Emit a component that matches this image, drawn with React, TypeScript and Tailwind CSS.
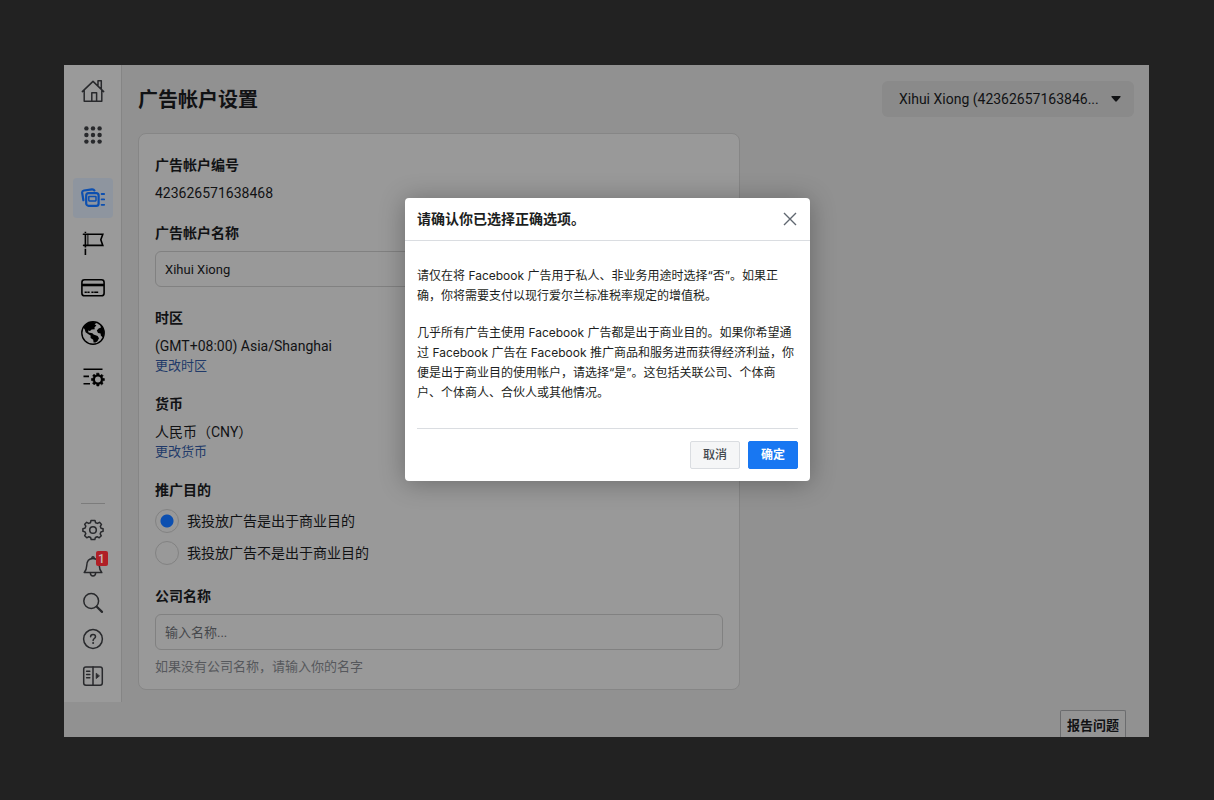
import React, { FC, ReactNode } from "react";

interface IconProps {
	children: ReactNode;
	className?: string;
}

const Icon: FC<IconProps> = ({ children, className = "" }) => (
	<svg
		viewBox="0 0 24 24"
		className={`w-6 h-6 shrink-0 ${className}`}
		fill="none"
		stroke="currentColor"
		strokeWidth="1.5"
		strokeLinecap="round"
		strokeLinejoin="round"
		aria-hidden="true"
	>
		{children}
	</svg>
);

const HomeIcon = () => (
	<Icon>
		<path d="M1.3 12.6 12 2.4 22.7 12.6M3.2 11V22.3H20.8V11M17 6.8V1.8H20.3V10M10.8 22V13.8H15.6V22" />
	</Icon>
);

const GridIcon = () => (
	<Icon>
		<g fill="currentColor" stroke="none">
			{[5.4, 12, 18.6].map((y) =>
				[5.4, 12, 18.6].map((x) => (
					<circle key={`${x}-${y}`} cx={x} cy={y} r="2.2" />
				))
			)}
		</g>
	</Icon>
);

const AccountsIcon = () => (
	<Icon className="text-[#0c4fb0]">
		<rect x="5.2" y="7.2" width="12.4" height="12.6" rx="2.4" strokeWidth="2.2" />
		<rect x="7.8" y="10.4" width="7.2" height="4.6" rx="0.4" strokeWidth="1.5" />
		<path d="M2.4 14.2 1.2 7Q0.9 4.9 3 4.5L11 3.3Q12.8 3.2 13.4 4.4" strokeWidth="2.2" />
		<path d="M20.6 8H23.2M20.6 13.4H23.2M20.6 18.8H23.2" strokeWidth="1.8" />
	</Icon>
);

const FlagIcon = () => (
	<Icon className="text-black">
		<path d="M4.4 0.8V24" strokeWidth="1.6" strokeDasharray="1.2 1 13.4 1.4 7" strokeLinecap="butt" />
		<path d="M2.4 3.2H21.8L19.8 8.8 21.8 14.4H2.6" strokeLinejoin="miter" strokeWidth="1.6" />
		<path d="M6.9 3.2V14.2" strokeWidth="1" />
	</Icon>
);

const CardIcon = () => (
	<Icon className="text-black">
		<rect x="0.9" y="3.8" width="22.2" height="16" rx="2.6" strokeWidth="1.6" />
		<path d="M1 9H23" strokeWidth="2.6" strokeLinecap="butt" />
		<path d="M3.6 16.2H8.6M10.4 16.2H17.2" strokeWidth="1.6" strokeDasharray="2.2 .6 4 .4" strokeLinecap="butt" />
	</Icon>
);

const GlobeIcon = () => (
	<Icon className="text-black">
		<circle cx="12" cy="12" r="11.2" strokeWidth="1.4" />
		<g fill="currentColor" stroke="none">
			<path d="M2.4 6.4C4.6 2.8 8.2 .9 12.2 1L15.6 1.8 13.6 3.2 15.4 4.6 13.4 6.4 13.8 8.2 10.6 8.4 9 10 7 9.6 7.6 11.4 11.4 12.2 12.6 13.6 16.6 15 18 17.2 16.4 20.2 14.6 21.6 12.6 21.4 12.2 18.8 9.6 17 9.6 14.6 7.4 13.2 4.6 11.2 3.8 8.6Z" />
			<path d="M19 3.6C21.6 5.6 23 8.6 23 12 22.9 13.8 22.4 15.2 21.8 16.4L19.8 14.6 19.6 12.6 17 12 15.8 9.6 17.6 7.4 20 6.6Z" />
		</g>
	</Icon>
);

// one path of eight teeth, drawn around the centre
const COG =
	"M10.3 1.6H13.7L14.2 4.4 16.2 5.2 18.5 3.6 20.6 5.7 19 8 19.8 10 22.6 10.4V13.7L19.8 14.2 19 16.1 20.5 18.4 18.2 20.7 16 19.1 14 19.9 13.6 22.6H10.3L9.8 19.9 7.9 19.1 5.6 20.6 3.3 18.3 4.9 16 4.1 14.1 1.4 13.6V10.3L4.1 9.9 5 7.9 3.4 5.6 5.6 3.5 7.9 5 9.8 4.3Z";

const ListCogIcon = () => (
	<Icon className="text-black">
		<path d="M2.5 3.2H21.5M2.5 10.4H8M2.5 17.8H9" strokeWidth="1.6" strokeLinecap="butt" />
		<g transform="translate(9.6 6.2) scale(0.61)">
			<path d={COG} fill="currentColor" strokeWidth="1" />
			<circle cx="12" cy="12" r="4.8" fill="#9a9a9a" stroke="none" />
		</g>
	</Icon>
);

const GearIcon = () => (
	<Icon>
		<path d="M10 2.5H14L14.6 4.7 16.5 5.4 18.5 4.3 20.5 6.4 19.3 8.3 20 10.2 22.1 10.7V13.3L20 13.9 19.2 15.8 20.3 17.8 18.2 19.8 16.2 18.7 14.4 19.5 13.8 21.6H10.2L9.6 19.5 7.8 18.7 5.8 19.8 3.7 17.7 4.8 15.7 4 13.9 1.9 13.3V10.7L4 10.1 4.8 8.2 3.7 6.3 5.7 4.3 7.7 5.4 9.5 4.7Z" />
		<circle cx="12" cy="12" r="3.3" />
	</Icon>
);

const BellIcon = () => (
	<Icon>
		<path d="M3.2 18.6C5.3 16.4 5.6 14.7 5.7 11.7 5.8 7.4 8.2 4.5 12 4.5S18.2 7.4 18.3 11.7C18.4 14.7 18.7 16.4 20.8 18.6Z" />
		<path d="M9.4 19.3C9.5 21 10.5 22 12 22S14.5 21 14.6 19.3M11 4.4V3.2Q12 2.2 13 3.2V4.4" />
	</Icon>
);

const SearchIcon = () => (
	<Icon>
		<circle cx="10.2" cy="10" r="7.4" />
		<path d="M15.8 15.7 21 20.9" strokeWidth="2.2" />
	</Icon>
);

const HelpIcon = () => (
	<Icon>
		<circle cx="12" cy="12" r="9.4" />
		<path d="M9.6 9.8C9.6 8.3 10.6 7.5 12 7.5S14.5 8.4 14.5 9.7C14.5 11.5 12.1 11.5 12.1 13.4" />
		<circle cx="12.1" cy="16.1" r="1" fill="currentColor" stroke="none" />
	</Icon>
);

const PanelIcon = () => (
	<Icon>
		<rect x="2.7" y="2.9" width="18.6" height="18.3" rx="2.2" />
		<path d="M12 3V21M5.6 7.2H8.8M5.6 10.5H8.8M5.6 13.8H8.8" />
		<path d="M15.2 9.6V14.6L18.2 12.1Z" fill="currentColor" strokeWidth="0.8" />
	</Icon>
);

interface SideButtonProps {
	label: string;
	children: ReactNode;
	className: string;
}

const SideButton: FC<SideButtonProps> = ({ label, children, className }) => (
	<button
		type="button"
		aria-label={label}
		className={`relative flex w-10 items-center justify-center rounded-sm ${className}`}
	>
		{children}
	</button>
);

const Sidebar = () => (
	<nav className="flex w-[58px] shrink-0 flex-col items-center self-start border-r border-[#858585] bg-[#9a9a9a] pt-1 pb-2 text-[#28292c]">
		<SideButton label="主页" className="h-11">
			<HomeIcon />
		</SideButton>
		<SideButton label="所有工具" className="h-11">
			<GridIcon />
		</SideButton>
		<div className="mt-[21px] flex flex-col items-center gap-[5px]">
			<SideButton label="广告帐户设置" className="h-10 bg-[#8e959f]">
				<AccountsIcon />
			</SideButton>
			<SideButton label="公共主页" className="h-10">
				<FlagIcon />
			</SideButton>
			<SideButton label="付款设置" className="h-10">
				<CardIcon />
			</SideButton>
			<SideButton label="公开主页" className="h-10">
				<GlobeIcon />
			</SideButton>
			<SideButton label="通知设置" className="h-10">
				<ListCogIcon />
			</SideButton>
		</div>
		<div className="mt-[105px] mb-2 w-6 border-t border-[#7c7c7c]" />
		<SideButton label="设置" className="h-9">
			<GearIcon />
		</SideButton>
		<SideButton label="通知" className="h-9">
			<BellIcon />
			<span className="absolute top-[3px] right-[5px] flex h-[15px] w-3 items-center justify-center rounded-xs bg-[#b01f26] text-xs font-medium text-[#c9b6b7]">
				1
			</span>
		</SideButton>
		<SideButton label="搜索" className="h-[37px]">
			<SearchIcon />
		</SideButton>
		<SideButton label="帮助" className="h-9">
			<HelpIcon />
		</SideButton>
		<SideButton label="展开" className="h-[37px]">
			<PanelIcon />
		</SideButton>
	</nav>
);

const fieldClass =
	"block h-9 w-full rounded-md border border-[#818181] bg-transparent px-[9px] text-[13px] text-[#111214] placeholder:text-[#46484c]";

const radioClass =
	"h-6 w-6 appearance-none rounded-full border border-[#828282] checked:bg-[radial-gradient(circle,#0c4fb0_6px,transparent_7px)]";

const SettingsCard = () => (
	<section className="max-w-[602px] rounded-lg border border-[#868686] bg-[#999] px-4 pt-[21px] pb-3 text-sm leading-5">
		<h2 className="font-bold">广告帐户编号</h2>
		<p className="mt-2">423626571638468</p>

		<label htmlFor="account-name" className="mt-5 block font-bold">
			广告帐户名称
		</label>
		<input id="account-name" className={`mt-2 ${fieldClass}`} defaultValue="Xihui Xiong" />

		<h2 className="mt-[21px] font-bold">时区</h2>
		<p className="mt-2">(GMT+08:00) Asia/Shanghai</p>
		<a href="#timezone" className="block w-fit text-[13px] text-[#213a69]">
			更改时区
		</a>

		<h2 className="mt-[18px] font-bold">货币</h2>
		<p className="mt-2">人民币（CNY）</p>
		<a href="#currency" className="block w-fit text-[13px] text-[#213a69]">
			更改货币
		</a>

		<fieldset className="mt-[18px]">
			<legend className="font-bold">推广目的</legend>
			<div className="mt-[9px] flex flex-col gap-2">
				<label className="flex items-center gap-2">
					<input type="radio" name="purpose" defaultChecked className={radioClass} />
					我投放广告是出于商业目的
				</label>
				<label className="flex items-center gap-2">
					<input type="radio" name="purpose" className={radioClass} />
					我投放广告不是出于商业目的
				</label>
			</div>
		</fieldset>

		<label htmlFor="company-name" className="mt-[21px] block font-bold">
			公司名称
		</label>
		<input id="company-name" className={`mt-2 ${fieldClass}`} placeholder="输入名称..." />
		<p className="mt-[7px] text-[13px] text-[#56585c]">如果没有公司名称，请输入你的名字</p>
	</section>
);

const ConfirmDialog = () => (
	<div className="absolute inset-0 flex items-start justify-center pt-[133px] pl-0.5">
		<div
			role="dialog"
			aria-modal="true"
			aria-labelledby="dialog-title"
			className="w-[405px] rounded-sm bg-white text-[#1c1e21] shadow-[0_2px_26px_rgba(0,0,0,0.3)]"
		>
			<header className="flex h-[43px] items-center justify-between border-b border-[#dadde1] px-3">
				<h2 id="dialog-title" className="text-sm font-bold">
					请确认你已选择正确选项。
				</h2>
				<button type="button" aria-label="关闭" className="flex h-5 w-4 items-center justify-center text-[#606770]">
					<svg viewBox="0 0 14 14" className="h-3.5 w-3.5 shrink-0" stroke="currentColor" strokeWidth="1.4" aria-hidden="true">
						<path d="M1 1 13 13M13 1 1 13" />
					</svg>
				</button>
			</header>
			<div className="space-y-[17px] pt-[25px] pr-3.5 pb-[25px] pl-3 font-[Inter,'Noto_Sans_CJK_SC',sans-serif] text-xs leading-5">
				<p>
					请仅在将 Facebook 广告用于私人、非业务用途时选择“否”。如果正确，你将需要支付以现行爱尔兰标准税率规定的增值税。
				</p>
				<p>
					几乎所有广告主使用 Facebook 广告都是出于商业目的。如果你希望通过 Facebook 广告在 Facebook
					推广商品和服务进而获得经济利益，你便是出于商业目的使用帐户，请选择“是”。这包括关联公司、个体商户、个体商人、合伙人或其他情况。
				</p>
			</div>
			<footer className="mx-3 flex justify-end gap-2 border-t border-[#dadde1] py-3 text-xs font-medium">
				<button type="button" className="h-7 rounded-xs border border-[#dadde1] bg-[#f5f6f7] px-3 text-[#444950]">
					取消
				</button>
				<button type="button" className="h-7 rounded-xs border border-[#1877f2] bg-[#1877f2] px-3 font-bold text-white">
					确定
				</button>
			</footer>
		</div>
	</div>
);

const App: FC = () => {
	return (
		<div className="min-h-screen bg-[#222] pt-[65px] pr-[65px] pb-[63px] pl-16 font-[Roboto,'Noto_Sans_CJK_SC',sans-serif]">
			<div className="relative flex overflow-hidden bg-[#919191] text-[#111214]">
				<Sidebar />
				<main className="flex min-w-0 flex-1 flex-col pt-4 pr-[15px] pl-4">
					<div className="flex items-start justify-between">
						<h1 className="pt-[5px] text-xl leading-7 font-bold">广告帐户设置</h1>
						<button
							type="button"
							className="flex h-9 w-[252px] items-center justify-between rounded-md bg-[#8a8a8a] pr-[13px] pl-[17px] text-sm"
						>
							<span className="whitespace-nowrap">Xihui Xiong (42362657163846...</span>
							<svg viewBox="0 0 10 6" className="h-1.5 w-2.5 shrink-0" fill="currentColor" aria-hidden="true">
								<path d="M1 0H9Q10 0 9.5 1L5.8 5.3Q5 6 4.2 5.3L.5 1Q0 0 1 0Z" />
							</svg>
						</button>
					</div>
					<div className="mt-4">
						<SettingsCard />
					</div>
					<button
						type="button"
						className="mt-5 mr-2 h-[27px] self-end rounded-t-xs border border-b-0 border-[#6b6c6e] bg-[#949494] px-1.5 pt-1 text-[13px] font-bold"
					>
						报告问题
					</button>
				</main>
				<ConfirmDialog />
			</div>
		</div>
	);
};

export default App;
